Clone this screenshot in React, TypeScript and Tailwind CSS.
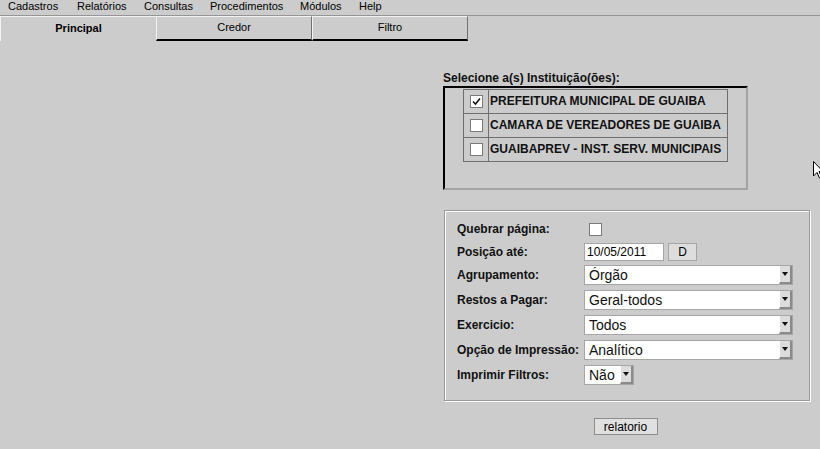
import React from 'react';

const menus = [
  { label: 'Cadastros', w: 'w-[69px]' },
  { label: 'Relatórios', w: 'w-[67px]' },
  { label: 'Consultas', w: 'w-[66px]' },
  { label: 'Procedimentos', w: 'w-[90px]' },
  { label: 'Módulos', w: 'w-[59px]' },
  { label: 'Help', w: 'w-[40px]' },
];

const instituicoes = [
  { nome: 'PREFEITURA MUNICIPAL DE GUAIBA', checked: true },
  { nome: 'CAMARA DE VEREADORES DE GUAIBA', checked: false },
  { nome: 'GUAIBAPREV - INST. SERV. MUNICIPAIS', checked: false },
];

function Checkbox({ checked }: { checked?: boolean }) {
  return (
    <div className="w-[13px] h-[13px] bg-white border border-[#7a7a7a] flex items-center justify-center">
      {checked && (
        <svg width="9" height="9" viewBox="0 0 9 9">
          <path d="M1 4.5 L3.5 7 L8 1.5" stroke="#111" strokeWidth="1.6" fill="none" />
        </svg>
      )}
    </div>
  );
}

function Select({ value, w }: { value: string; w: string }) {
  return (
    <div className={`${w} h-[20px] bg-white border border-[#a6a6a6] flex items-center`}>
      <span className="pl-[4px] text-[14px] text-[#111] leading-none">{value}</span>
      <div className="ml-auto w-[13px] h-[18px] bg-[#dcdcdc] border-r-2 border-b-2 border-[#8a8a8a] border-l border-l-white flex items-center justify-center">
        <svg width="6" height="4" viewBox="0 0 6 4">
          <path d="M0 0 H6 L3 4 Z" fill="#111" />
        </svg>
      </div>
    </div>
  );
}

function Row({ label, children, className = '' }: { label: string; children: React.ReactNode; className?: string }) {
  return (
    <div className={`flex items-center ${className}`}>
      <div className="w-[127px] text-[12px] font-bold text-[#111]">{label}</div>
      {children}
    </div>
  );
}

export default function App() {
  return (
    <div className="relative w-[820px] h-[449px] bg-[#cccccc] font-['Liberation_Sans',Arial,sans-serif] text-black overflow-hidden">
      {/* menu */}
      <div className="h-[16px] flex items-start pt-[0px] pl-[8px] border-b border-[#959595] text-[11px] leading-[13px]">
        {menus.map((m) => (
          <div key={m.label} className={m.w}>{m.label}</div>
        ))}
      </div>

      {/* abas */}
      <div className="flex h-[25px] text-[11px]">
        <div className="w-[156px] border-t border-l border-[#f2f2f2] flex items-center justify-center font-bold pb-[1px]">
          Principal
        </div>
        <div className="w-[156px] border-t border-l border-[#f2f2f2] border-r border-r-[#707070] border-b-2 border-b-black flex items-center justify-center pb-[2px]">
          Credor
        </div>
        <div className="w-[156px] border-t border-l border-[#f2f2f2] border-r border-r-[#707070] border-b-2 border-b-black flex items-center justify-center pb-[2px]">
          Filtro
        </div>
      </div>

      <div className="flex justify-end pr-[10px]">
        <div className="w-[367px] flex flex-col">
          <div className="mt-[30px] text-[12px] font-bold leading-[14px] text-[#111]">
            Selecione a(s) Instituição(ões):
          </div>
          <div className="mt-[1px] w-[305px] h-[104px] border-2 border-t-black border-l-black border-r-[#a4a4a4] border-b-[#a4a4a4] pl-[18px] pt-[1px]">
            <div className="w-[265px] border-t border-l border-[#6e6e6e]">
              {instituicoes.map((i) => (
                <div key={i.nome} className="flex h-[24px] border-b border-[#6e6e6e]">
                  <div className="w-[25px] border-r border-[#6e6e6e] flex items-center justify-center">
                    <Checkbox checked={i.checked} />
                  </div>
                  <div className="flex-1 border-r border-[#6e6e6e] flex items-center pl-[1px] pb-[2px] text-[12px] font-bold text-[#111]">
                    {i.nome}
                  </div>
                </div>
              ))}
            </div>
          </div>

          <div className="mt-[20px] ml-[1px] w-[366px] h-[191px] border border-[#9a9a9a] shadow-[inset_1px_1px_0_#fff,1px_1px_0_#fff] pl-[12px] pt-[9px] flex flex-col gap-[5px]">
            <Row label="Quebrar página:">
              <div className="h-[17px] flex items-center pl-[5px]">
                <Checkbox />
              </div>
            </Row>
            <Row label="Posição até:">
              <div className="w-[80px] h-[18px] bg-white border border-[#a6a6a6] flex items-center pl-[2px] text-[12px]">
                10/05/2011
              </div>
              <div className="ml-[4px] w-[29px] h-[18px] bg-[#dddddd] border border-[#a6a6a6] flex items-center justify-center text-[12px]">
                D
              </div>
            </Row>
            <Row label="Agrupamento:" className="-mt-[1px]">
              <Select value="Órgão" w="w-[209px]" />
            </Row>
            <Row label="Restos a Pagar:">
              <Select value="Geral-todos" w="w-[209px]" />
            </Row>
            <Row label="Exercicio:">
              <Select value="Todos" w="w-[209px]" />
            </Row>
            <Row label="Opção de Impressão:">
              <Select value="Analítico" w="w-[209px]" />
            </Row>
            <Row label="Imprimir Filtros:">
              <Select value="Não" w="w-[50px]" />
            </Row>
          </div>

          <div className="mt-[17px] flex justify-center pr-[2px]">
            <div className="w-[64px] h-[17px] bg-[#e0e0e0] border border-[#8e8e8e] flex items-center justify-center text-[12px]">
              relatorio
            </div>
          </div>
        </div>
      </div>

      {/* cursor do mouse */}
      <svg className="absolute left-[813px] top-[161px]" width="10" height="18" viewBox="0 0 10 18">
        <path d="M0.5 0.5 L0.5 15 L4 11.5 L6.5 17 L8.5 16 L6 10.5 L10 10.5 Z" fill="#fff" stroke="#000" strokeWidth="1" />
      </svg>
    </div>
  );
}
